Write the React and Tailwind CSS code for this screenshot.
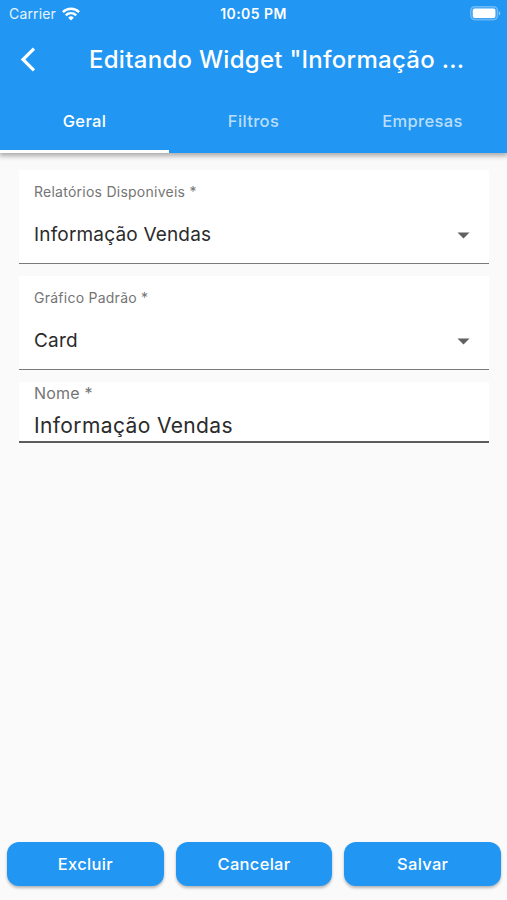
import { useState } from 'react';

const tabs = ['Geral', 'Filtros', 'Empresas'];
const actions = ['Excluir', 'Cancelar', 'Salvar'];

const WifiIcon = () => (
    <svg width="18" height="14" viewBox="0 0 18 14" fill="none" stroke="white" strokeWidth="2.4">
        <path d="M0.9 5.1a11.4 11.4 0 0 1 16.2 0" />
        <path d="M3.8 8.3a7.4 7.4 0 0 1 10.4 0" />
        <path d="M9 13.6 6.2 10.7a4 4 0 0 1 5.6 0Z" fill="white" stroke="none" />
    </svg>
);

const BatteryIcon = () => (
    <svg width="31" height="15" viewBox="0 0 31 15">
        <rect x="0.6" y="0.6" width="27" height="13.2" rx="4" fill="white" fillOpacity="0.15" stroke="white" strokeOpacity="0.3" strokeWidth="1.2" />
        <rect x="2.8" y="2.6" width="22.6" height="9.4" rx="2" fill="white" />
        <path d="M28.9 5.2v4.2c.9-.3 1.4-1.1 1.4-2.1s-.5-1.8-1.4-2.1Z" fill="white" fillOpacity="0.5" />
    </svg>
);

const StatusBar = () => (
    <div className="grid grid-cols-3 items-center h-7 pl-[9px] pr-[6px] pb-px leading-none">
        <div className="flex items-center gap-[6px]">
            <span className="text-[14px] tracking-[0.15px] text-white/90">Carrier</span>
            <WifiIcon />
        </div>
        <span className="-ml-[3px] text-center text-[14px] font-semibold tracking-[0.45px]">10:05 PM</span>
        <div className="flex justify-end">
            <BatteryIcon />
        </div>
    </div>
);

const SelectField = ({ label, value }) => (
    <div className="h-[94px] bg-white border-b border-[#7a7a7a] px-[15px] pt-[12px]">
        <p className="text-[14px] leading-5 tracking-[0.25px] text-[#757575]">{label}</p>
        <div className="flex items-center justify-between mt-[19px] pr-[4px]">
            <span className="text-[19px] leading-[28px] tracking-[0.18px] text-[#2b2b2b]">{value}</span>
            <svg width="13" height="7" viewBox="0 0 13 7" fill="#616161">
                <path d="M0.5 0.5h12l-6 6Z" />
            </svg>
        </div>
    </div>
);

const App = () => {
    const [active, setActive] = useState(0);
    const [name, setName] = useState('Informação Vendas');

    return (
        <div className="flex flex-col h-[900px] w-full bg-[#fafafa] font-['Inter','Liberation_Sans',sans-serif]">
            <header className="h-[152.5px] shrink-0 bg-[#2196f3] text-white shadow-[0_2px_5px_1px_rgba(0,0,0,0.32)]">
                <StatusBar />
                <div className="flex items-center h-[63px] pl-[20px]">
                    <svg width="17" height="25" viewBox="0 0 17 25" fill="none" stroke="white" strokeWidth="3.2">
                        <path d="M14 1.6 3 12.5 14 23.4" />
                    </svg>
                    <h1 className="ml-[52px] pt-px text-[24px] font-medium tracking-[0.28px] whitespace-nowrap">
                        Editando Widget "Informação ...
                    </h1>
                </div>
                <nav className="grid grid-cols-3 h-[61.5px]">
                    {tabs.map((tab, i) => (
                        <button
                            key={tab}
                            onClick={() => setActive(i)}
                            className={`border-b-3 pt-[3px] text-[16.5px] font-medium tracking-[0.35px] ${i === active ? 'border-white text-white' : 'border-transparent text-white/70'}`}
                        >
                            {tab}
                        </button>
                    ))}
                </nav>
            </header>

            <main className="flex-1 pl-[19px] pr-[18px] pt-[17.5px]">
                <SelectField label="Relatórios Disponiveis *" value="Informação Vendas" />
                <div className="mt-[12px]">
                    <SelectField label="Gráfico Padrão *" value="Card" />
                </div>
                <label className="block h-[61px] mt-[12px] bg-white border-b-2 border-[#5c5c5c] px-[15px] pt-px">
                    <span className="block text-[16px] leading-5 tracking-[0.2px] text-[#757575]">Nome *</span>
                    <input
                        value={name}
                        onChange={e => setName(e.target.value)}
                        className="block w-full mt-[9px] h-[28px] text-[21px] tracking-[0.38px] text-[#2b2b2b] outline-none"
                    />
                </label>
            </main>

            <footer className="grid grid-cols-3 gap-[12px] pl-[7px] pr-[6px] pb-[14px]">
                {actions.map(action => (
                    <button
                        key={action}
                        className="h-[44px] rounded-[12px] bg-[#2196f3] text-[16.5px] font-medium tracking-[0.3px] text-white shadow-[0_2px_3px_rgba(0,0,0,0.28)]"
                    >
                        {action}
                    </button>
                ))}
            </footer>
        </div>
    );
};

export default App;
